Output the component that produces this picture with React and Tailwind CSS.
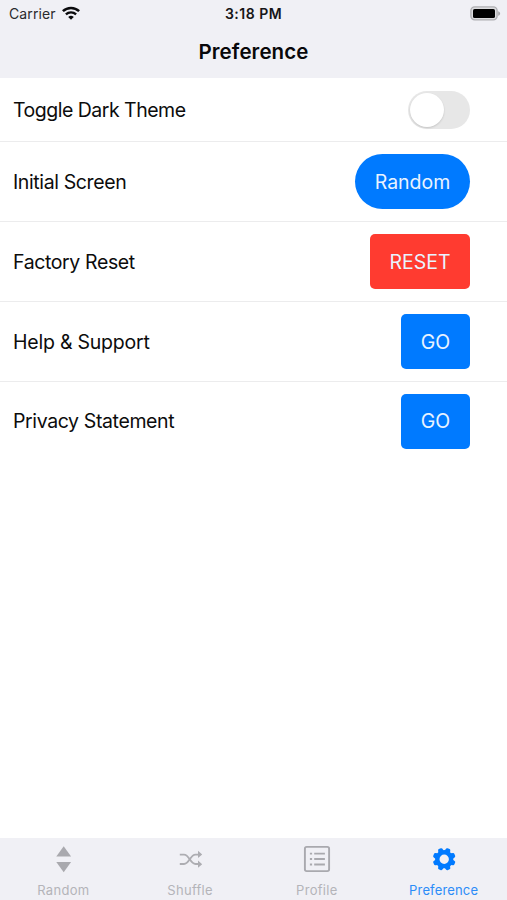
function WifiIcon() {
  return (
    <svg width="18" height="14" viewBox="0 0 18 14" fill="none" stroke="#0a0a0c">
      <path d="M0.9 5.2 A11.6 11.6 0 0 1 17.1 5.2" strokeWidth="2.5" />
      <path d="M3.9 8.4 A7.3 7.3 0 0 1 14.1 8.4" strokeWidth="2.3" />
      <path d="M9 13.8 L6.2 11 A4 4 0 0 1 11.8 11 Z" fill="#0a0a0c" stroke="none" />
    </svg>
  );
}

function BatteryIcon() {
  return (
    <svg width="32" height="15" viewBox="0 0 32 15">
      <rect x="1.9" y="0.9" width="26.2" height="13" rx="3.8" fill="#dcdcdf" stroke="#aeaeb2" strokeWidth="1.4" />
      <rect x="4" y="3" width="22" height="9" rx="1.6" fill="#000" />
      <path d="M29.2 5.2 C31.8 6.2 31.8 8.8 29.2 9.8 Z" fill="#a5a5a9" />
    </svg>
  );
}

function SortIcon() {
  return (
    <svg width="32" height="32" viewBox="0 0 32 32" fill="#a9a9ae">
      <path d="M16.7 3.2 L24.1 13.6 H9.3 Z" />
      <path d="M16.7 29.3 L24.1 19.1 H9.3 Z" />
    </svg>
  );
}

function ShuffleIcon() {
  return (
    <svg width="32" height="32" viewBox="0 0 32 32" fill="none" stroke="#adadb2" strokeWidth="1.8">
      <path d="M5.8 11.6 H10 C15.5 11.6 16 21 21.5 21 H25.2" />
      <path d="M5.8 21 H10 C15.5 21 16 11.6 21.5 11.6 H25.2" />
      <path d="M24 7.8 L28.2 11.4 L24 15 Z M24 17.6 L28.2 21.2 L24 24.8 Z" fill="#adadb2" stroke="none" />
    </svg>
  );
}

function ListIcon() {
  return (
    <svg width="32" height="32" viewBox="0 0 32 32" fill="none" stroke="#a9a9ae">
      <rect x="3.9" y="3.9" width="24.2" height="24.2" rx="1.8" strokeWidth="1.9" />
      <path d="M13.2 10.6 H23.9 M13.2 16 H23.9 M13.2 21.5 H23.9" strokeWidth="1.8" />
      <path d="M8.9 10.6 H11.1 M8.9 16 H11.1 M8.9 21.5 H11.1" strokeWidth="1.8" />
    </svg>
  );
}

const teeth = [22.5, 67.5, 112.5, 157.5, 202.5, 247.5, 292.5, 337.5];

function GearIcon() {
  return (
    <svg width="32" height="32" viewBox="-16 -16 32 32" fill="#007aff">
      <g transform="translate(0.2 0.2)">
        <circle r="6.9" fill="none" stroke="#007aff" strokeWidth="4.4" />
        {teeth.map((angle) => (
          <path
            key={angle}
            d="M-3 -8 L-2.2 -10.6 Q-1.9 -11.4 -1.1 -11.4 H1.1 Q1.9 -11.4 2.2 -10.6 L3 -8 Z"
            transform={`rotate(${angle})`}
          />
        ))}
      </g>
    </svg>
  );
}

function Row({ label, tracking = "tracking-[-0.38px]", height = "h-20", last = false, children }) {
  return (
    <div
      className={`flex items-center justify-between pl-[13px] pr-[37px] ${height} ${last ? "" : "border-b border-[#ececed]"}`}
    >
      <span className={`text-[19.5px] leading-6 text-[#0c0c0c] ${tracking}`}>{label}</span>
      {children}
    </div>
  );
}

function Button({ children, className }) {
  return (
    <button className={`flex h-[55px] items-center justify-center pt-[2px] text-[19.5px] text-[#e9f3ff] ${className}`}>
      {children}
    </button>
  );
}

function Tab({ icon, label, active = false }) {
  return (
    <div className="flex flex-1 flex-col items-center pt-[5px]">
      {icon}
      <span
        className={`mt-[7px] text-[13px] leading-4 ${active ? "tracking-[0.15px] text-[#2b8cf8]" : "tracking-[0.3px] text-[#b4b4b9]"}`}
      >
        {label}
      </span>
    </div>
  );
}

export default function App() {
  return (
    <div className="flex h-[900px] w-full flex-col overflow-hidden bg-white font-['Inter',sans-serif]">
      <header className="h-[78px] shrink-0 bg-[#f0f0f5]">
        <div className="grid h-[26px] grid-cols-3 items-center px-[7px]">
          <div className="flex items-center gap-[6px] pl-[2px] text-[14px] tracking-[0.1px] text-[#2a2a2d]">
            <span>Carrier</span>
            <WifiIcon />
          </div>
          <div className="text-center text-[14px] font-semibold tracking-[0.5px] text-[#161618]">3:18 PM</div>
          <div className="-mr-px flex justify-end">
            <BatteryIcon />
          </div>
        </div>
        <h1 className="mt-3 text-center text-[20.5px] font-semibold leading-7 tracking-[0.1px] text-[#08080a]">
          Preference
        </h1>
      </header>
      <main className="flex-1">
        <Row label="Toggle Dark Theme" height="h-16" tracking="tracking-[-0.5px]">
          <div className="flex h-[38px] w-[62px] items-center rounded-full bg-[#e7e7e7] pl-[2px]">
            <div className="size-[34px] rounded-full bg-white shadow-[0_1px_2px_rgba(0,0,0,0.15)]" />
          </div>
        </Row>
        <Row label="Initial Screen">
          <Button className="w-[115px] rounded-full bg-[#007aff]">Random</Button>
        </Row>
        <Row label="Factory Reset">
          <Button className="w-[100px] rounded-[5px] bg-[#ff3b30]">RESET</Button>
        </Row>
        <Row label="Help & Support" tracking="tracking-[-0.22px]">
          <Button className="w-[69px] rounded-[5px] bg-[#007aff]">GO</Button>
        </Row>
        <Row label="Privacy Statement" height="h-[78px]" last>
          <Button className="w-[69px] rounded-[5px] bg-[#007aff]">GO</Button>
        </Row>
      </main>
      <nav className="flex h-[62px] shrink-0 bg-[#f0f0f5]">
        <Tab icon={<SortIcon />} label="Random" />
        <Tab icon={<ShuffleIcon />} label="Shuffle" />
        <Tab icon={<ListIcon />} label="Profile" />
        <Tab icon={<GearIcon />} label="Preference" active />
      </nav>
    </div>
  );
}
